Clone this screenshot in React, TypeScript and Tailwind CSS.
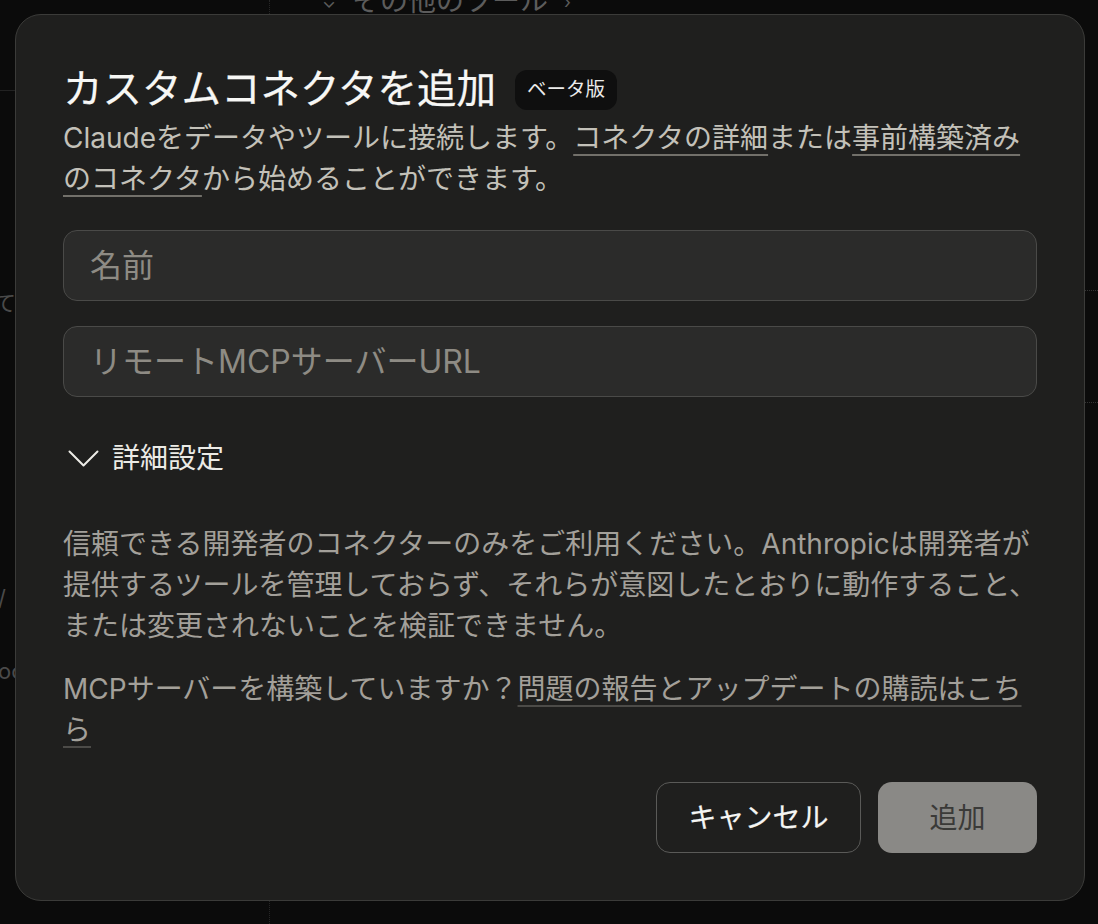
import React from "react"

const font = "font-['Inter','Noto_Sans_CJK_JP',sans-serif]"

function ChevronDown() {
  return (
    <svg
      viewBox="0 0 31 17"
      className="ml-[5px] h-[17px] w-[31px] shrink-0"
      fill="none"
      stroke="#ecebe6"
      strokeWidth={2}
      strokeLinecap="round"
      strokeLinejoin="round"
    >
      <path d="M1.5 1.5 L15.5 15.5 L29.5 1.5" />
    </svg>
  )
}

function Backdrop() {
  return (
    <div className="flex h-[924px] w-full">
      <aside className="w-[270px] shrink-0 border-r border-dotted border-[#262626]">
        <div className="h-[91px] border-b border-[#222]" />
        <div className="-ml-[6px] mt-[196px] whitespace-nowrap text-[22px] text-[#4a4a4a]">
          てください
        </div>
        <div className="-ml-[2px] mt-[262px] whitespace-nowrap text-[22px] text-[#4a4a4a]">
          /
        </div>
        <div className="-ml-[2px] mt-[40px] whitespace-nowrap text-[22px] text-[#4a4a4a]">
          oc
        </div>
      </aside>
      <main className="flex-1">
        <div className="-mt-[20px] flex items-center gap-4 pl-[52px] text-[28px] text-[#5c5c5c]">
          <span className="text-[18px]">⌄</span>
          <span>その他のツール</span>
          <span className="text-[18px]">›</span>
        </div>
        <div className="mt-[268px] border-t border-dotted border-[#333]" />
        <div className="mt-[111px] border-t border-dotted border-[#333]" />
      </main>
    </div>
  )
}

export default function App() {
  return (
    <div className={`relative h-[924px] w-full overflow-hidden bg-[#0b0b0b] ${font}`}>
      <Backdrop />
      <div className="absolute inset-0 pl-[15px] pt-[14px]">
        <div className="w-[1070px] rounded-[26px] border border-[#3b3b39] bg-[#1f1f1e] px-[47px] pb-[47px] pt-[47px]">
          <div className="flex h-[56px] items-center gap-[19px]">
            <h2 className="text-[39.5px] font-normal leading-none text-[#f7f7f5] [-webkit-text-stroke:0.25px_#f7f7f5]">
              カスタムコネクタを追加
            </h2>
            <span className="flex h-[40px] items-center rounded-[12px] bg-[#0f0f0f] px-[12px] text-[19.5px] text-[#ebebea]">
              ベータ版
            </span>
          </div>

          <p className="text-[28px] leading-[41px] text-[#c3c1b9]">
            Claudeをデータやツールに接続します。
            <a className="underline decoration-[#72706a] decoration-2 underline-offset-[6px]">
              コネクタの詳細
            </a>
            または
            <a className="underline decoration-[#72706a] decoration-2 underline-offset-[6px]">
              事前構築済みのコネクタ
            </a>
            から始めることができます。
          </p>

          <div className="mt-[30px] flex flex-col gap-[25px]">
            <input
              placeholder="名前"
              className="h-[71px] w-full rounded-[14px] border-[1.5px] border-[#4a4a48] bg-[#2b2b2a] px-[26px] text-[32px] text-[#f0efea] outline-none placeholder:text-[#8e8b84]"
            />
            <input
              placeholder="リモートMCPサーバーURL"
              className="h-[71px] w-full rounded-[14px] border-[1.5px] border-[#4a4a48] bg-[#2b2b2a] px-[26px] text-[32px] text-[#f0efea] outline-none placeholder:text-[#8e8b84]"
            />
          </div>

          <button className="mt-[40px] flex h-[42px] items-center gap-[13px] text-[28px] text-[#ecebe6]">
            <ChevronDown />
            <span>詳細設定</span>
          </button>

          <p className="-mr-2 mt-[45px] text-[28px] leading-[41px] text-[#a3a09a]">
            信頼できる開発者のコネクターのみをご利用ください。Anthropicは開発者が提供するツールを管理しておらず、それらが意図したとおりに動作すること、または変更されないことを検証できません。
          </p>

          <p className="mt-[22px] text-[28px] leading-[41px] text-[#a3a09a]">
            MCPサーバーを構築していますか？
            <a className="underline decoration-[#4c4b48] decoration-2 underline-offset-[6px]">
              問題の報告とアップデートの購読はこちら
            </a>
          </p>

          <div className="mt-[31px] flex justify-end gap-[17px]">
            <button className="h-[71px] w-[205px] rounded-[14px] border border-[#5a5a58] text-[28px] font-normal text-[#f5f5f3] [-webkit-text-stroke:0.2px_#f5f5f3]">
              キャンセル
            </button>
            <button className="h-[71px] w-[159px] rounded-[14px] bg-[#8a8986] text-[28px] text-[#3a3a38]">
              追加
            </button>
          </div>
        </div>
      </div>
    </div>
  )
}
